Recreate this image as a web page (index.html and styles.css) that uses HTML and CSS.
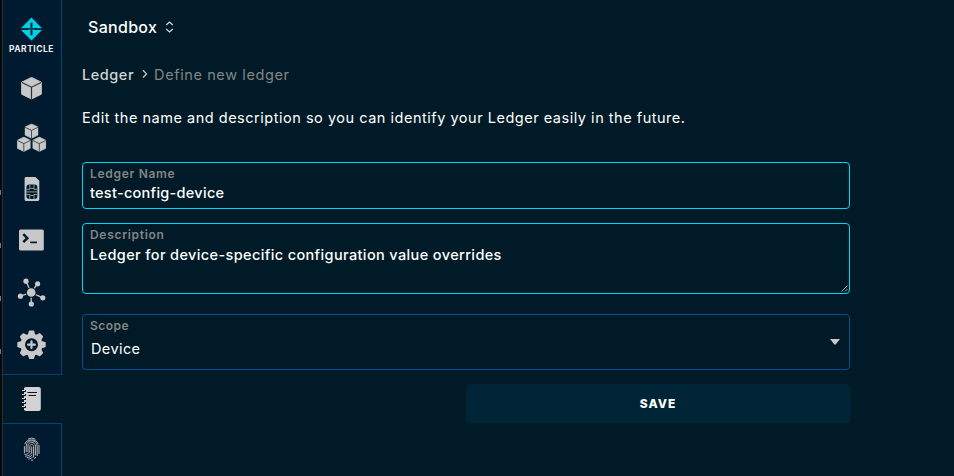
FILE: index.html
```html
<!DOCTYPE html>
<html lang="en">
<head>
<meta charset="utf-8">
<title>Define new ledger</title>
<link rel="stylesheet" href="styles.css">
</head>
<body>
<div class="edge"><i></i><i></i><i></i><i></i></div>
<nav class="sidebar">
  <a class="logo">
    <svg width="22" height="24" viewBox="0 0 22 24"><path fill="#00cfe8" d="M10.500 .4 21 11.200H0zM0 13h21L10.500 23.600z"/><path stroke="#001b2c" stroke-width="2" d="M10.500 5.800v12.400M5 12.100h11"/><path stroke="#00cfe8" stroke-width=".6" d="M7 12.100h7"/></svg>
    <span>PARTICLE</span>
  </a>
  <a class="item"><svg width="32" height="32" viewBox="0 0 32 32"><use href="#cube" x="5" y="4.7" width="21" height="23"/></svg></a>
  <a class="item cubes"><svg width="32" height="32" viewBox="0 0 32 32"><use href="#cube" x="8.500" y="1.4" width="14" height="15.4"/><use href="#cube" x=".8" y="14.6" width="14" height="15.4"/><use href="#cube" x="16.300" y="14.6" width="14" height="15.4"/></svg></a>
  <a class="item"><svg width="32" height="32" viewBox="0 0 32 32"><path fill="#c8c8c8" d="M10 4h9.500l3.800 3.800v18.800a1.400 1.400 0 0 1-1.400 1.400H10a1.400 1.400 0 0 1-1.400-1.400V5.400A1.400 1.400 0 0 1 10 4z"/><rect x="10.400" y="11.500" width="11" height="14.500" rx="3" fill="#001b2c"/><path d="M10.400 16.300h3.200l1-1h2.600l1 1h3.200M10.400 21.500h3.200l1 1h2.600l1-1h3.200M13.800 11.500v4.700M18 11.500v4.700M13.800 21.500v4.500M18 21.500v4.500M10.400 18.900h11" fill="none" stroke="#c8c8c8" stroke-width=".7"/></svg></a>
  <a class="item"><svg width="32" height="32" viewBox="0 0 32 32"><rect x="3" y="5.500" width="24.800" height="21" rx="1.500" fill="#c8c8c8"/><path d="m7.300 10.200 4 4-4 4" fill="none" stroke="#001b2c" stroke-width="2.500"/><path d="M14 18.400h7" stroke="#001b2c" stroke-width="1.700"/></svg></a>
  <a class="item hub"><svg width="32" height="32" viewBox=".3 0 32 32"><path d="M15.500 16.500 10.300 5.200M15.500 16.500l6.200-8.700M15.500 16.500 4.700 20.200M15.500 16.500v11.400M15.500 16.500l11.500 5.300" stroke="#c8c8c8" stroke-width="1.300"/><g fill="#c8c8c8"><circle cx="15.500" cy="16.500" r="5.200" fill="#001b2c"/><circle cx="15.500" cy="16.500" r="4.300"/><circle cx="10.300" cy="5.200" r="2.600"/><circle cx="21.900" cy="7.800" r="2.600"/><circle cx="4.700" cy="20.200" r="2.600"/><circle cx="15.600" cy="28" r="2.600"/><circle cx="27.100" cy="21.800" r="2.600"/></g></svg></a>
  <a class="item gear"><svg width="32" height="32" viewBox="-15.500 -15.700 32 32"><g fill="#c8c8c8"><circle r="11"/><g id="teeth"><path id="tooth" d="M-4-9-2.600-13.600Q-2.400-14.200-1.800-14.200H1.800Q2.400-14.200 2.600-13.600L4-9V9L2.600 13.600Q2.400 14.200 1.800 14.200H-1.800Q-2.400 14.200-2.600 13.600L-4 9z"/><use href="#tooth" transform="rotate(90)"/></g><use href="#teeth" transform="rotate(45)"/></g><circle r="6.500" fill="#001b2c"/><path d="M0-3.400v6.800M-3.400 0h6.800" stroke="#c8c8c8" stroke-width="2.200" stroke-linecap="round"/></svg></a>
  <a class="item active"><svg width="32" height="32" viewBox="0 0 32 32"><path fill="#d2d2d2" d="M9.800 4h13a2 2 0 0 1 2 2v20a2 2 0 0 1-2 2h-13A1.800 1.800 0 0 1 8 26.200V5.800A1.800 1.800 0 0 1 9.800 4z"/><path stroke="#001b27" stroke-width="2" d="M7.200 8h2.800M7.200 12h2.800M7.200 16h2.800M7.200 20h2.800M7.200 24h2.800"/><path stroke="#d2d2d2" stroke-width="1.200" d="M6 7.500h3M6 11.500h3M6 15.500h3M6 19.500h3M6 23.500h3"/><path stroke="#001b27" stroke-width="1" d="M11.500 9.500H21M12.500 12.500H20"/></svg></a>
  <a class="item finger"><svg width="32" height="32" viewBox="0 0 32 32"><g fill="none" stroke="#b8b8b8" stroke-width="1"><path d="M12 6.200a7 7 0 0 1 7.400 0M8.800 11.200c1-5.800 12.400-5.800 13.400 0M8.400 13.200v7M23 12v9M10.200 19v-6c0-7 11-7 11 0v10M12 19v-6c0-4.700 7.400-4.700 7.400 0v9.500M13.800 19v-5.600c0-2.600 3.800-2.600 3.800 0v11M15.700 13.500v7M8.500 21.400c2.500 0 4-1 5.200-2.500M9.200 23.200c3.200-.2 5-1.500 6.500-3.200M10.600 24.800c2.800-.4 4.400-1.500 5.600-3M12.300 26.200c2-.4 3.200-1.100 4.200-2.200M15 27.200h2M17.800 25.600l2.200-1.200"/></g></svg></a>
</nav>
<main>
  <header class="project">Sandbox <svg width="9" height="12" viewBox="0 0 9 12"><path d="M1.200 4 4.500 1l3.300 3M1.200 8l3.300 3 3.300-3" fill="none" stroke="#d8dadb" stroke-width="1.200"/></svg></header>
  <div class="crumbs"><b>Ledger</b><svg width="6" height="10" viewBox="0 0 6 10"><path d="m1 1.300 3.500 3.600L1 8.500" fill="none" stroke="#c5c7c8" stroke-width="1.300"/></svg><span>Define new ledger</span></div>
  <p class="intro">Edit the name and description so you can identify your Ledger easily in the future.</p>
  <form>
    <div class="field name"><label>Ledger Name</label><div class="value">test-config-device</div></div>
    <div class="field desc"><label>Description</label><div class="value">Ledger for device-specific configuration value overrides</div>
      <svg class="grip" width="7" height="7" viewBox="0 0 7 7"><path d="M.5 6.500l6-6M4 6.500 6.500 4" stroke="#b7bdc0" stroke-width=".9"/></svg></div>
    <div class="field scope"><div><label>Scope</label><div class="value">Device</div></div>
      <svg width="10" height="6" viewBox="0 0 10 6"><path fill="#c8c8c8" d="M0 0h10L5.800 5.300Q5 6 4.200 5.300z"/></svg></div>
    <button type="button">SAVE</button>
  </form>
</main>
<svg width="0" height="0" class="defs"><symbol id="cube" viewBox="0 0 21 23"><path fill="#c8c8c8" stroke="#c8c8c8" stroke-linejoin="round" d="M10.500.7 20.300 5.500v12L10.500 22.300.7 17.500v-12z"/><path d="M.8 5.800 10.500 10.500l9.700-4.700M10.500 10.500v12" fill="none" stroke="#24333f" stroke-width="1.200"/></symbol></svg>
</body>
</html>
```
FILE: styles.css
```css
* { box-sizing: border-box; }
body {
  margin: 0;
  width: 954px;
  height: 476px;
  display: flex;
  overflow: hidden;
  background: #001b27;
  color: #fff;
  font-family: Inter, "Open Sans", sans-serif;
}
.edge {
  width: 3px;
  background: #070909;
  border-right: 1px solid #25333b;
  display: flex;
  flex-direction: column;
  gap: 48px;
  padding-top: 190px;
}
.edge i { width: 1px; height: 5px; background: #777; }
.sidebar {
  width: 59px;
  background: #001b2f;
  border-right: 1px solid #00427a;
  display: flex;
  flex-direction: column;
}
.logo {
  height: 62px;
  padding-top: 17px;
  display: flex;
  flex-direction: column;
  align-items: center;
  margin-left: -1px;
}
.logo span {
  font-size: 8.5px;
  line-height: 10px;
  font-weight: 700;
  margin-top: 3px;
  letter-spacing: .5px;
  color: #eee;
}
.item {
  height: 51px;
  display: flex;
  align-items: center;
  justify-content: center;
  flex: none;
  margin-left: -1px;
}
.item svg { display: block; }
.cubes { height: 50px; }
.hub { height: 53px; }
.gear { height: 56px; padding-bottom: 2px; }
.active {
  height: 50px;
  margin: 0 -1px 0 0;
  padding-right: 1px;
  background: #001b27;
  border: 1px solid #00427a;
  border-width: 1px 0;
}
.finger { height: 52px; padding-bottom: 2px; }
main { width: 768px; margin-left: 20px; }
.project {
  display: flex;
  align-items: center;
  gap: 8px;
  height: 20px;
  margin: 17px 0 0 6px;
  font-size: 16px;
  font-weight: 500;
  letter-spacing: .3px;
}
.crumbs {
  display: flex;
  align-items: center;
  height: 20px;
  margin-top: 27px;
  font-size: 14.5px;
  color: #858585;
}
.crumbs b { font-weight: 500; color: #d4d6d7; letter-spacing: .55px; }
.crumbs svg { margin: 0 6px 0 8px; }
.crumbs span { letter-spacing: .6px; }
.intro {
  margin: 24px 0 0;
  font-size: 14.5px;
  line-height: 20px;
  letter-spacing: .52px;
  white-space: nowrap;
}
form { margin-top: 34px; display: flex; flex-direction: column; }
.field { border: 1px solid #00d5f5; border-radius: 4px; padding: 4px 7px; }
label {
  display: block;
  font-size: 12px;
  line-height: 14px;
  font-weight: 600;
  letter-spacing: .7px;
  color: #858585;
}
.value {
  margin-top: 2px;
  font-size: 14.5px;
  line-height: 20px;
  font-weight: 500;
  letter-spacing: .28px;
  white-space: nowrap;
}
.name { height: 47px; }
.desc { height: 71px; margin-top: 14px; position: relative; }
.desc .value { margin-top: 3px; letter-spacing: .375px; }
.grip { position: absolute; right: 1px; bottom: 1px; }
.scope {
  height: 56px;
  margin-top: 20px;
  padding-right: 9px;
  border-color: #004f8e;
  display: flex;
  justify-content: space-between;
}
.scope label { letter-spacing: .5px; }
.scope svg { align-self: center; }
.scope .value { margin: 6px 0 0 1px; font-weight: 400; letter-spacing: .4px; }
button {
  width: 384px;
  height: 39px;
  margin-top: 14px;
  align-self: flex-end;
  border: 0;
  border-radius: 4px;
  background: #002536;
  color: #fff;
  font: 800 12px Inter, sans-serif;
  letter-spacing: 1px;
}
.defs { position: absolute; }
```
